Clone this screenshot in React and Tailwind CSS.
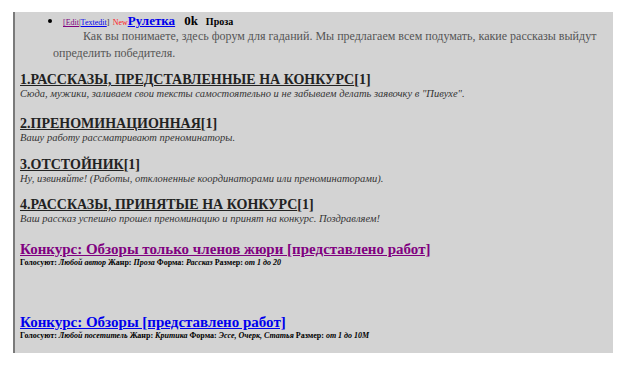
export default function App() {
  const sections = [
    {
      title: '1.РАССКАЗЫ, ПРЕДСТАВЛЕННЫЕ НА КОНКУРС',
      note: 'Сюда, мужики, заливаем свои тексты самостоятельно и не забываем делать заявочку в "Пивухе".',
      gap: 'mt-[10px]'
    },
    { title: '2.ПРЕНОМИНАЦИОННАЯ', note: 'Вашу работу рассматривают преноминаторы.', gap: 'mt-[16px]' },
    {
      title: '3.ОТСТОЙНИК',
      note: 'Ну, извиняйте! (Работы, отклоненные координаторами или преноминаторами).',
      gap: 'mt-[13px]'
    },
    {
      title: '4.РАССКАЗЫ, ПРИНЯТЫЕ НА КОНКУРС',
      note: 'Ваш рассказ успешно прошел преноминацию и принят на конкурс. Поздравляем!',
      gap: 'mt-[12px]'
    }
  ]

  return (
    <div className="h-[367px] w-[626px] bg-white pl-[13px] pt-[12px] font-['Liberation_Serif',serif]">
      <div className="h-[341px] w-[600px] overflow-hidden border-l-2 border-[#7a7a7a] bg-[#d3d3d3] pl-[5px]">
        <ul className="ml-[33px] mt-[2px] list-disc pl-[10px]">
          <li className="h-[14px] text-[13px] leading-[14px]">
            <span className="text-[8px]">
              <span className="text-[#800080] underline">[Edit</span>
              <span className="text-[#333]">|</span>
              <span className="text-[#0000ee] underline">Textedit</span>
              <span className="text-[#333]">]</span>
            </span>{' '}
            <span className="text-[8px] text-[#ff2020]">New</span>
            <span className="font-bold text-[#0000ee] underline">Рулетка</span>
            <span className="ml-[9px] font-bold">0k</span>
            <span className="ml-[8px] text-[10px] font-bold">Проза</span>
          </li>
        </ul>
        <p className="ml-[33px] whitespace-nowrap indent-[30px] text-[12px] leading-[17px] text-[#555]">
          Как вы понимаете, здесь форум для гаданий. Мы предлагаем всем подумать, какие рассказы выйдут
          <br />
          определить победителя.
        </p>

        {sections.map((s) => (
          <div key={s.title} className={s.gap}>
            <div className="text-[14px] font-bold leading-[16px] text-[#222]">
              <span className="underline">{s.title}</span>[1]
            </div>
            <div className="text-[10.5px] italic leading-[12px] text-[#333]">{s.note}</div>
          </div>
        ))}

        <div className="mt-[15px]">
          <div className="text-[15px] font-bold leading-[18px] text-[#800080] underline">
            Конкурс: Обзоры только членов жюри [представлено работ]
          </div>
          <div className="text-[8px] font-bold leading-[10px] text-black">
            Голосуют: <i>Любой автор</i> Жанр: <i>Проза</i> Форма: <i>Рассказ</i> Размер: <i>от 1 до 20</i>
          </div>
        </div>

        <div className="mt-[45px]">
          <div className="text-[15px] font-bold leading-[18px] text-[#0000ee] underline">
            Конкурс: Обзоры [представлено работ]
          </div>
          <div className="text-[8px] font-bold leading-[10px] text-black">
            Голосуют: <i>Любой посетитель</i> Жанр: <i>Критика</i> Форма: <i>Эссе, Очерк, Статья</i> Размер:{' '}
            <i>от 1 до 10М</i>
          </div>
        </div>
      </div>
    </div>
  )
}
